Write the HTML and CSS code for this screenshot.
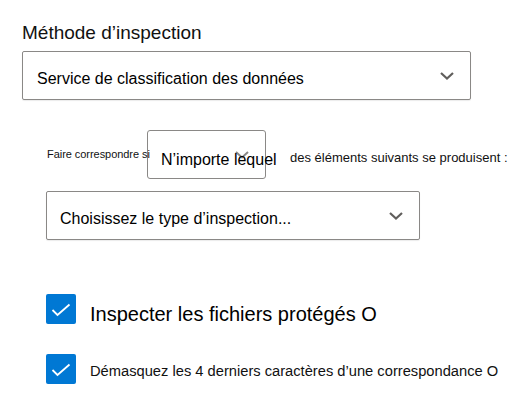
FILE: index.html
```html
<!DOCTYPE html>
<html lang="fr">
<head>
<meta charset="utf-8">
<title>Méthode d’inspection</title>
<link rel="stylesheet" href="styles.css">
</head>
<body>
<div class="page">
  <div class="method">
    <div class="heading">Méthode d’inspection</div>
    <div class="select select-main">
      <span class="select-text">Service de classification des données</span>
      <svg class="chevron" width="14" height="8" viewBox="0 0 14 8"><path d="M1 1 L7 6.5 L13 1" fill="none" stroke="#605e5c" stroke-width="2.2"/></svg>
    </div>
  </div>
  <div class="rules">
    <div class="match-row">
      <span class="match-label">Faire correspondre si</span>
      <div class="mini-select">
        <svg class="chevron chevron-under" width="14" height="8" viewBox="0 0 14 8"><path d="M1 1 L7 6.5 L13 1" fill="none" stroke="#8a8886" stroke-width="2"/></svg>
        <span class="mini-text">N’importe lequel</span>
      </div>
      <span class="match-tail">des éléments suivants se produisent :</span>
    </div>
    <div class="select select-type">
      <span class="select-text">Choisissez le type d’inspection...</span>
      <svg class="chevron" width="14" height="8" viewBox="0 0 14 8"><path d="M1 1 L7 6.5 L13 1" fill="none" stroke="#605e5c" stroke-width="2.2"/></svg>
    </div>
    <div class="check-row check-first">
      <span class="box"><svg width="30" height="30" viewBox="0 0 30 30"><path d="M6.5 16 L11.5 21 L23.5 10.5" fill="none" stroke="#fff" stroke-width="1.8"/></svg></span>
      <span class="check-label big">Inspecter les fichiers protégés O</span>
    </div>
    <div class="check-row check-second">
      <span class="box"><svg width="30" height="30" viewBox="0 0 30 30"><path d="M6.5 16 L11.5 21 L23.5 10.5" fill="none" stroke="#fff" stroke-width="1.8"/></svg></span>
      <span class="check-label small">Démasquez les 4 derniers caractères d’une correspondance O</span>
    </div>
  </div>
</div>
</body>
</html>
```
FILE: styles.css
```css
* { box-sizing: border-box; }
html, body { margin: 0; padding: 0; background: #fff; }
body {
  font-family: "Liberation Sans", Arial, sans-serif;
  color: #000;
  width: 523px;
  height: 408px;
  overflow: hidden;
}
.page { padding-top: 22px; }
.method { padding-left: 22px; }
.heading {
  font-size: 19px;
  line-height: 22px;
  color: #111;
}
.select {
  display: flex;
  align-items: center;
  height: 49px;
  border: 1px solid #8a8886;
  border-radius: 2px;
  background: #fff;
  box-shadow: 0 1px 1px rgba(0,0,0,0.08);
}
.select-main {
  margin-top: 7px;
  width: 449px;
  padding: 0 16px 0 14px;
}
.select-text {
  font-size: 16px;
  line-height: 41px;
  padding-top: 6px;
  flex: 1;
  white-space: nowrap;
}
.chevron { display: block; flex: none; }
.rules {
  padding-left: 46px;
  margin-top: 30px;
}
.match-row {
  display: flex;
  align-items: flex-start;
  height: 49px;
}
.match-label {
  position: relative;
  z-index: 2;
  width: 100px;
  margin-left: 1px;
  padding-top: 18px;
  font-size: 11px;
  line-height: 13px;
  letter-spacing: -0.05px;
  white-space: nowrap;
  color: #111;
}
.mini-select {
  position: relative;
  width: 119px;
  height: 49px;
  border: 1px solid #8a8886;
  border-radius: 3px;
  padding: 10px 0 0 13px;
}
.mini-text {
  position: relative;
  display: block;
  font-size: 16px;
  line-height: 37px;
  white-space: nowrap;
}
.chevron-under {
  position: absolute;
  right: 16px;
  top: 20px;
}
.match-tail {
  margin-left: 24px;
  padding-top: 20px;
  font-size: 13px;
  line-height: 15px;
  white-space: nowrap;
  color: #111;
}
.select-type {
  margin-top: 12px;
  width: 374px;
  padding: 0 16px 0 13px;
}
.check-row {
  display: flex;
  align-items: flex-start;
  gap: 14px;
}
.check-first { margin-top: 54px; height: 30px; }
.check-second { margin-top: 30px; }
.box {
  width: 30px;
  height: 30px;
  flex: none;
  background: #0078d4;
  border-radius: 2px;
  display: block;
}
.box svg { display: block; }
.check-label { white-space: nowrap; }
.check-label.big {
  font-size: 20px;
  line-height: 24px;
  padding-top: 8px;
}
.check-label.small {
  font-size: 14.7px;
  line-height: 18px;
  padding-top: 7.6px;
  color: #111;
}
```
